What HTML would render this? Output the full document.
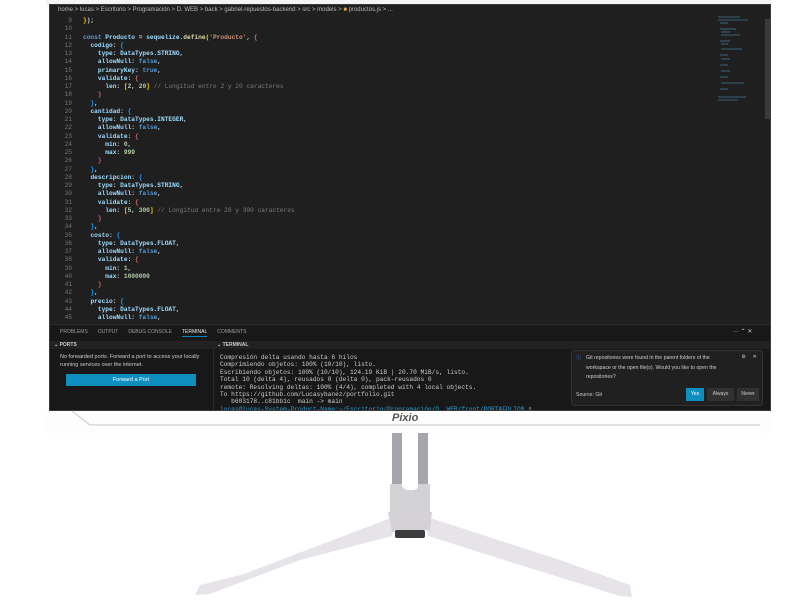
<!DOCTYPE html>
<html><head><meta charset="utf-8"><style>
*{margin:0;padding:0;box-sizing:border-box}
body{width:800px;height:600px;background:#fff;position:relative;overflow:hidden;font-family:"Liberation Sans",sans-serif}
#scr{position:absolute;left:49px;top:4px;width:722px;height:407px;background:#1f1f1f;border:1px solid #3a3a3a;overflow:hidden}
.bc{position:absolute;left:8px;top:2px;font-size:6px;color:#b8b8b8;white-space:nowrap}
.code{position:absolute;left:0;top:12px;font-family:"Liberation Mono",monospace;font-size:6.2px;line-height:8.25px;white-space:pre;color:#d4d4d4;font-weight:bold}
.ln{display:inline-block;width:22px;text-align:right;color:#6e7681;margin-right:11px;font-weight:normal}
.k{color:#569cd6}.v{color:#9cdcfe}.f{color:#dcdcaa}.s{color:#ce9178}.c{color:#7a7a7a;font-weight:normal}.n{color:#b5cea8}.p{color:#d16969}.y{color:#ffd700}.b{color:#179fff}
.mini{position:absolute;left:668px;top:10px;width:40px;height:90px}
.sb{position:absolute;left:715px;top:14px;width:5px;height:100px;background:#3a3a3a}
#panel{position:absolute;left:0;top:319px;width:720px;height:88px;background:#181818;border-top:1px solid #2b2b2b}
.tabs{position:absolute;left:10px;top:4px;font-size:5px;color:#9d9d9d;white-space:nowrap}
.tabs span{margin-right:10px}
.tabs .a{color:#e7e7e7;border-bottom:1px solid #0a84c1;padding-bottom:1px}
.hdr{position:absolute;top:16px;height:8px;left:0;width:720px;background:#222}
.hdr span{position:absolute;top:1px;font-size:5px;color:#ccc;font-weight:bold}
.ports{position:absolute;left:10px;top:28px;font-size:5.5px;line-height:8px;color:#ccc;width:140px}
.btn{position:absolute;left:16px;top:49px;width:130px;height:12px;background:#0e8fc0;color:#fff;font-size:5.5px;text-align:center;line-height:12px}
.div{position:absolute;left:163px;top:24px;width:1px;height:64px;background:#2b2b2b}
.term{position:absolute;left:170px;top:29px;font-family:"Liberation Mono",monospace;font-size:6.2px;line-height:7.4px;white-space:pre;color:#ccc}
.notif{position:absolute;left:521px;top:25px;width:192px;height:56px;background:#202020;border:1px solid #333;border-radius:3px;font-size:5.2px;color:#ccc}
.notif .m{position:absolute;left:14px;top:3px;line-height:9.5px;width:140px}
.nb{position:absolute;top:37px;height:13px;line-height:13px;font-size:5px;text-align:center;color:#ccc;background:#313131}
#bez{position:absolute;left:46px;top:411px;width:726px;height:22px;background:#fdfdfd}
.logo{position:absolute;left:392px;top:412px;font-size:11px;font-style:italic;color:#555;font-weight:bold}
</style></head><body>
<div style="position:absolute;left:46px;top:0;width:726px;height:5px;background:#f4f4f4"></div>
<div id="scr">
<div class="bc">home &gt; lucas &gt; Escritorio &gt; Programación &gt; D. WEB &gt; back &gt; gabriel-repuestos-backend &gt; src &gt; models &gt; <span style="color:#e8a33d">■</span> productos.js &gt; ...</div>
<div class="code"><span class="ln">9</span><span class="y">}</span>);
<span class="ln">10</span>
<span class="ln">11</span><span class="k">const</span> <span class="v">Producto</span> = <span class="v">sequelize</span>.<span class="f">define</span><span class="y">(</span><span class="s">'Producto'</span>, <span class="p">{</span>
<span class="ln">12</span>  <span class="v">codigo</span>: <span class="b">{</span>
<span class="ln">13</span>    <span class="v">type</span>: <span class="v">DataTypes</span>.<span class="v">STRING</span>,
<span class="ln">14</span>    <span class="v">allowNull</span>: <span class="k">false</span>,
<span class="ln">15</span>    <span class="v">primaryKey</span>: <span class="k">true</span>,
<span class="ln">16</span>    <span class="v">validate</span>: <span class="p">{</span>
<span class="ln">17</span>      <span class="v">len</span>: <span class="y">[</span><span class="n">2</span>, <span class="n">20</span><span class="y">]</span> <span class="c">// Longitud entre 2 y 20 caracteres</span>
<span class="ln">18</span>    <span class="p">}</span>
<span class="ln">19</span>  <span class="b">}</span>,
<span class="ln">20</span>  <span class="v">cantidad</span>: <span class="b">{</span>
<span class="ln">21</span>    <span class="v">type</span>: <span class="v">DataTypes</span>.<span class="v">INTEGER</span>,
<span class="ln">22</span>    <span class="v">allowNull</span>: <span class="k">false</span>,
<span class="ln">23</span>    <span class="v">validate</span>: <span class="p">{</span>
<span class="ln">24</span>      <span class="v">min</span>: <span class="n">0</span>,
<span class="ln">25</span>      <span class="v">max</span>: <span class="n">999</span>
<span class="ln">26</span>    <span class="p">}</span>
<span class="ln">27</span>  <span class="b">}</span>,
<span class="ln">28</span>  <span class="v">descripcion</span>: <span class="b">{</span>
<span class="ln">29</span>    <span class="v">type</span>: <span class="v">DataTypes</span>.<span class="v">STRING</span>,
<span class="ln">30</span>    <span class="v">allowNull</span>: <span class="k">false</span>,
<span class="ln">31</span>    <span class="v">validate</span>: <span class="p">{</span>
<span class="ln">32</span>      <span class="v">len</span>: <span class="y">[</span><span class="n">5</span>, <span class="n">300</span><span class="y">]</span> <span class="c">// Longitud entre 20 y 300 caracteres</span>
<span class="ln">33</span>    <span class="p">}</span>
<span class="ln">34</span>  <span class="b">}</span>,
<span class="ln">35</span>  <span class="v">costo</span>: <span class="b">{</span>
<span class="ln">36</span>    <span class="v">type</span>: <span class="v">DataTypes</span>.<span class="v">FLOAT</span>,
<span class="ln">37</span>    <span class="v">allowNull</span>: <span class="k">false</span>,
<span class="ln">38</span>    <span class="v">validate</span>: <span class="p">{</span>
<span class="ln">39</span>      <span class="v">min</span>: <span class="n">1</span>,
<span class="ln">40</span>      <span class="v">max</span>: <span class="n">1000000</span>
<span class="ln">41</span>    <span class="p">}</span>
<span class="ln">42</span>  <span class="b">}</span>,
<span class="ln">43</span>  <span class="v">precio</span>: <span class="b">{</span>
<span class="ln">44</span>    <span class="v">type</span>: <span class="v">DataTypes</span>.<span class="v">FLOAT</span>,
<span class="ln">45</span>    <span class="v">allowNull</span>: <span class="k">false</span>,</div>
<svg class="mini" viewBox="0 0 40 90"><g stroke="#4a8fb8" stroke-width="0.8" opacity=".8">
<line x1="0" y1="2" x2="22" y2="2"/><line x1="0" y1="5" x2="30" y2="5"/><line x1="2" y1="8" x2="10" y2="8"/><line x1="2" y1="14" x2="18" y2="14"/><line x1="3" y1="17" x2="12" y2="17"/><line x1="3" y1="20" x2="22" y2="20"/><line x1="2" y1="26" x2="12" y2="26"/><line x1="3" y1="29" x2="10" y2="29"/><line x1="3" y1="34" x2="24" y2="34"/><line x1="2" y1="40" x2="10" y2="40"/><line x1="3" y1="44" x2="12" y2="44"/><line x1="2" y1="50" x2="10" y2="50"/><line x1="3" y1="56" x2="12" y2="56"/><line x1="2" y1="62" x2="10" y2="62"/><line x1="3" y1="68" x2="26" y2="68"/><line x1="2" y1="74" x2="10" y2="74"/><line x1="0" y1="82" x2="28" y2="82"/><line x1="0" y1="85" x2="20" y2="85"/></g></svg>
<div class="sb"></div>
<div id="panel">
<div class="tabs"><span>PROBLEMS</span><span>OUTPUT</span><span>DEBUG CONSOLE</span><span class="a">TERMINAL</span><span>COMMENTS</span></div>
<div style="position:absolute;left:683px;top:3px;font-size:6px;color:#ccc">··· ⌃ ✕</div>
<div class="hdr"><span style="left:4px">⌄ PORTS</span><span style="left:167px">⌄ TERMINAL</span></div>
<div class="ports">No forwarded ports. Forward a port to access your locally running services over the internet.</div>
<div class="btn">Forward a Port</div>
<div class="div"></div>
<div class="term">Compresión delta usando hasta 6 hilos
Comprimiendo objetos: 100% (10/10), listo.
Escribiendo objetos: 100% (10/10), 124.19 KiB | 20.70 MiB/s, listo.
Total 10 (delta 4), reusados 0 (delta 0), pack-reusados 0
remote: Resolving deltas: 100% (4/4), completed with 4 local objects.
To https://github.com/Lucasybanez/portfolio.git
   b603178..c81bb1c  main -&gt; main
<span style="color:#2aa0d8">lucas@lucas-System-Product-Name:~/Escritorio/Programación/D. WEB/front/PORTAFOLIO$</span> ▯</div>
<div class="notif"><span style="position:absolute;left:4px;top:3px;color:#3794ff">ⓘ</span><div class="m">Git repositories were found in the parent folders of the workspace or the open file(s). Would you like to open the repositories?</div><span style="position:absolute;right:16px;top:3px">⚙</span><span style="position:absolute;right:5px;top:3px">✕</span><span style="position:absolute;left:4px;top:41px">Source: Git</span>
<div class="nb" style="left:114px;width:18px;background:#0e8fc0;color:#fff">Yes</div><div class="nb" style="left:135px;width:27px">Always</div><div class="nb" style="left:165px;width:22px">Never</div></div>
</div>
</div>
<div id="bez"></div>
<svg style="position:absolute;left:0;top:405px" width="800" height="195" viewBox="0 405 800 195">
<path d="M72 411 L90 425 L760 425" stroke="#c8c8c8" stroke-width="1" fill="none"/>
<rect x="392" y="433" width="10" height="56" fill="#a6a6aa"/>
<rect x="418" y="433" width="10" height="56" fill="#a6a6aa"/>
<path d="M390 484 L402 484 L402 486 Q404 490 408 490 L412 490 Q418 490 418 486 L418 484 L430 484 L430 514 L390 514Z" fill="#d2d2d4"/>
<path d="M396 516 L244 574 L200 585 L195 595 L210 594 L300 560 L392 536 Z" fill="#e6e4e8"/>
<path d="M424 516 L560 560 L630 585 L632 597 L620 596 L520 565 L428 536 Z" fill="#e6e4e8"/>
<path d="M388 512 L432 512 L430 530 L392 532Z" fill="#d4d2d6"/>
<rect x="395" y="530" width="30" height="8" rx="2" fill="#3c3c3c"/>
</svg>
<div class="logo">Pixio</div>
</body></html>
